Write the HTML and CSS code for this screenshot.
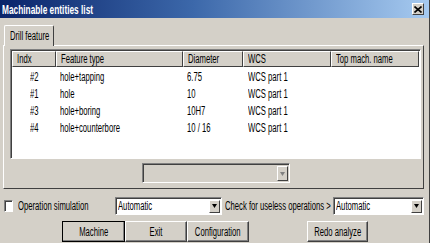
FILE: index.html
```
<!DOCTYPE html>
<html lang="en">
<head>
	<meta charset="UTF-8">
	<title>Machinable entities list</title>
	<link rel="stylesheet" href="styles.css">
</head>
<body>
	<div class="window">
		<div class="titlebar">
			<span class="t title">Machinable entities list</span>
			<span class="close"><svg width="8" height="7" viewBox="0 0 8 7"><path d="M0.5 0.5l7 6M7.5 0.5l-7 6"/></svg></span>
		</div>

		<div class="tabs">
			<div class="tab"><span class="t">Drill feature</span></div>
		</div>

		<div class="panel">
			<div class="list">
				<div class="row head">
					<div class="c-idx"><span class="t">Indx</span></div>
					<div class="c-type"><span class="t">Feature type</span></div>
					<div class="c-dia"><span class="t">Diameter</span></div>
					<div class="c-wcs"><span class="t">WCS</span></div>
					<div class="c-top"><span class="t">Top mach. name</span></div>
				</div>
				<div class="row">
					<div class="c-idx"><span class="t">#2</span></div>
					<div class="c-type"><span class="t">hole+tapping</span></div>
					<div class="c-dia"><span class="t">6.75</span></div>
					<div class="c-wcs"><span class="t">WCS part 1</span></div>
					<div class="c-top"></div>
				</div>
				<div class="row">
					<div class="c-idx"><span class="t">#1</span></div>
					<div class="c-type"><span class="t">hole</span></div>
					<div class="c-dia"><span class="t">10</span></div>
					<div class="c-wcs"><span class="t">WCS part 1</span></div>
					<div class="c-top"></div>
				</div>
				<div class="row">
					<div class="c-idx"><span class="t">#3</span></div>
					<div class="c-type"><span class="t">hole+boring</span></div>
					<div class="c-dia"><span class="t">10H7</span></div>
					<div class="c-wcs"><span class="t">WCS part 1</span></div>
					<div class="c-top"></div>
				</div>
				<div class="row">
					<div class="c-idx"><span class="t">#4</span></div>
					<div class="c-type"><span class="t">hole+counterbore</span></div>
					<div class="c-dia"><span class="t">10 / 16</span></div>
					<div class="c-wcs"><span class="t">WCS part 1</span></div>
					<div class="c-top"></div>
				</div>
			</div>

			<div class="combo disabled">
				<span class="combo-text"></span>
				<span class="arrow"><svg width="5" height="4" viewBox="0 0 5 4"><path d="M0 0h5l-2.5 4z"/></svg></span>
			</div>
		</div>

		<div class="options">
			<label class="check"><span class="box"></span><span class="t">Operation simulation</span></label>
			<div class="combo sim">
				<span class="combo-text"><span class="t">Automatic</span></span>
				<span class="arrow"><svg width="5" height="4" viewBox="0 0 5 4"><path d="M0 0h5l-2.5 4z"/></svg></span>
			</div>
			<span class="opt-label"><span class="t">Check for useless operations &gt;</span></span>
			<div class="combo useless">
				<span class="combo-text"><span class="t">Automatic</span></span>
				<span class="arrow"><svg width="5" height="4" viewBox="0 0 5 4"><path d="M0 0h5l-2.5 4z"/></svg></span>
			</div>
		</div>

		<div class="buttons">
			<div class="btn default"><span class="t">Machine</span></div>
			<div class="btn"><span class="t">Exit</span></div>
			<div class="btn"><span class="t">Configuration</span></div>
			<div class="btn redo"><span class="t">Redo analyze</span></div>
		</div>
	</div>
</body>
</html>
```

FILE: styles.css
```
*, *:after, *:before { box-sizing: border-box; }
html, body { margin: 0; padding: 0; width: 430px; height: 243px; overflow: hidden; }
body { font-family: "Liberation Sans", Arial, sans-serif; font-size: 12px; color: #000; background: #d4d0c8; }

/* the old dialog font is very narrow: squeeze every text run sideways */
.t { display: inline-block; white-space: nowrap; transform: scaleX(.64); transform-origin: 0 50%; }

.window { display: flex; flex-direction: column; width: 430px; height: 243px; background: #d4d0c8; border-right: 1px solid #404040; }

/* title bar */
.titlebar { display: flex; align-items: center; justify-content: space-between; height: 18px; padding: 0 5px 0 2px; background: linear-gradient(to right, #0a246a, #3c68aa 45%, #a6caf0); }
.title { color: #fff; font-weight: bold; font-size: 13px; transform: scaleX(.64); }
.close { display: flex; align-items: center; justify-content: center; width: 12px; height: 12px; background: #d4d0c8; border: 1px solid; border-color: #fff #404040 #404040 #fff; }
.close svg { stroke: #000; stroke-width: 1.6; fill: none; }

/* tabs */
.tabs { display: flex; padding: 7px 0 0 4px; }
.tab { height: 21px; width: 50px; padding: 3px 0 0 5px; overflow: hidden; background: #d4d0c8; border: 1px solid; border-color: #fff #404040 transparent #fff; border-bottom: 0; border-radius: 2px 2px 0 0; margin-bottom: -1px; position: relative; }

/* panel */
.panel { display: flex; flex-direction: column; align-items: center; height: 144px; margin: 0 5px 0 3px; border: 1px solid; border-color: #fff #404040 #404040 #fff; padding: 3px 2px 0 6px; }

.list { align-self: stretch; height: 110px; padding: 1px 0 0 1px; background: #fff; border: 1px solid; border-color: #808080 #fff #fff #808080; box-shadow: inset 1px 1px 0 #404040; }
.row { display: flex; height: 17px; align-items: center; }
.row > div { padding-left: 4px; white-space: nowrap; overflow: hidden; }
.row.head { height: 16px; margin-bottom: 1px; }
.row.head > div { height: 16px; line-height: 14px; background: #d4d0c8; border: 1px solid; border-color: #fff #404040 #404040 #fff; }
.c-idx { width: 44px; }
.c-type { width: 127px; }
.c-dia { width: 60px; }
.c-wcs { width: 88px; }
.c-top { width: 88px; }
.row:not(.head) .c-idx { padding-left: 18px; }
.row:not(.head) .c-wcs { padding-left: 5px; }

/* combo boxes */
.combo { display: flex; align-items: stretch; height: 18px; background: #fff; border: 1px solid; border-color: #808080 #fff #fff #808080; box-shadow: inset 1px 1px 0 #404040; padding: 2px 1px 1px 2px; }
.combo-text { flex: 1; line-height: 13px; overflow: hidden; }
.arrow { flex: none; display: flex; align-items: center; justify-content: center; width: 11px; background: #d4d0c8; border: 1px solid; border-color: #fff #404040 #404040 #fff; }
.arrow svg { fill: #000; }
.combo.disabled { width: 148px; height: 20px; margin-top: 4px; background: #d4d0c8; }
.combo.disabled .arrow svg { fill: #808080; }

/* options row */
.options { display: flex; align-items: center; height: 32px; padding: 1px 0 0 4px; }
.check { flex: none; display: flex; align-items: center; width: 111px; }
.box { flex: none; width: 9px; height: 12px; margin-right: 5px; background: #fff; border: 1px solid; border-color: #808080 #fff #fff #808080; box-shadow: inset 1px 1px 0 #404040; }
.combo.sim { flex: none; width: 107px; }
.opt-label { flex: none; width: 111px; padding-left: 3px; }
.combo.useless { flex: none; width: 91px; }

/* buttons */
.buttons { display: flex; height: 21px; padding-left: 62px; }
.btn { flex: none; display: flex; align-items: center; justify-content: center; height: 21px; width: 62px; border: 1px solid; border-color: #fff #404040 #404040 #fff; box-shadow: inset -1px -1px 0 #808080; }
.btn .t { transform-origin: 50% 50%; }
.btn.default { width: 63px; outline: 1px solid #000; outline-offset: -1px; }
.btn.redo { width: 61px; margin-left: 58px; }
```
